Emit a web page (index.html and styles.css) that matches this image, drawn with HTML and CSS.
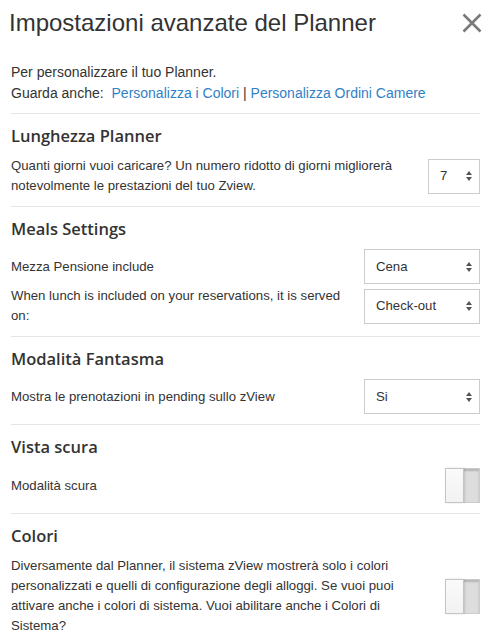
FILE: index.html
```html
<!DOCTYPE html>
<html lang="it">
<head>
<meta charset="utf-8">
<title>Impostazioni avanzate del Planner</title>
<link rel="stylesheet" href="styles.css">
</head>
<body>
<div class="modal">
  <div class="modal-header">
    <h1 class="modal-title">Impostazioni avanzate del Planner</h1>
    <button class="close" aria-label="Chiudi">
      <svg width="20" height="20" viewBox="0 0 20 20"><path d="M1.5 1.5 L18.5 18.5 M18.5 1.5 L1.5 18.5" stroke="#7a7a7a" stroke-width="2.6" fill="none"/></svg>
    </button>
  </div>
  <div class="intro">
    <p>Per personalizzare il tuo Planner.</p>
    <p>Guarda anche: <a class="first" href="#">Personalizza i Colori</a> | <a href="#">Personalizza Ordini Camere</a></p>
  </div>

  <section class="section">
    <h2>Lunghezza Planner</h2>
    <div class="row">
      <div class="label">Quanti giorni vuoi caricare? Un numero ridotto di giorni migliorerà notevolmente le prestazioni del tuo Zview.</div>
      <div class="select small"><span>7</span><i class="arrows"></i></div>
    </div>
  </section>

  <section class="section">
    <h2>Meals Settings</h2>
    <div class="row">
      <div class="label">Mezza Pensione include</div>
      <div class="select"><span>Cena</span><i class="arrows"></i></div>
    </div>
    <div class="row tight">
      <div class="label">When lunch is included on your reservations, it is served on:</div>
      <div class="select"><span>Check-out</span><i class="arrows"></i></div>
    </div>
  </section>

  <section class="section">
    <h2>Modalità Fantasma</h2>
    <div class="row">
      <div class="label">Mostra le prenotazioni in pending sullo zView</div>
      <div class="select"><span>Si</span><i class="arrows"></i></div>
    </div>
  </section>

  <section class="section">
    <h2>Vista scura</h2>
    <div class="row spaced">
      <div class="label">Modalità scura</div>
      <div class="toggle"><span class="knob"></span></div>
    </div>
  </section>

  <section class="section last">
    <h2>Colori</h2>
    <div class="row">
      <div class="label">Diversamente dal Planner, il sistema zView mostrerà solo i colori personalizzati e quelli di configurazione degli alloggi. Se vuoi puoi attivare anche i colori di sistema. Vuoi abilitare anche i Colori di Sistema?</div>
      <div class="toggle"><span class="knob"></span></div>
    </div>
  </section>
</div>
</body>
</html>
```

FILE: styles.css
```css
* { box-sizing: border-box; }
html, body { margin: 0; padding: 0; background: #fff; }
body {
  font-family: "Liberation Sans", Arial, sans-serif;
  font-size: 13.2px;
  line-height: 20px;
  color: #333;
}
.modal { padding: 0 10px 0 11px; }
.modal-header {
  display: flex;
  align-items: center;
  justify-content: space-between;
  padding-top: 8px;
  height: 38px;
}
.modal-title {
  margin: 0 0 0 -2px;
  font-family: "Liberation Sans", Arial, sans-serif;
  font-weight: normal;
  font-size: 24px;
  line-height: 30px;
  color: #333;
}
.close {
  border: 0;
  background: none;
  padding: 0;
  margin: 0 -2px 0 0;
  width: 20px;
  height: 20px;
  display: block;
}
.close svg { display: block; }
.intro {
  padding-top: 24px;
  padding-bottom: 9px;
  border-bottom: 1px solid #e5e5e5;
  font-size: 14px;
}
.intro p { margin: 0; line-height: 21px; }
.intro a { color: #3181c6; text-decoration: none; }
.intro a.first { margin-left: 4px; }
.section {
  padding: 12px 0 10px;
  border-bottom: 1px solid #e5e5e5;
}
.section.last { border-bottom: 0; }
.section h2 {
  margin: 0 0 10px;
  font-family: "Open Sans", sans-serif;
  font-weight: 600;
  font-size: 16.5px;
  line-height: 20px;
  color: #333;
}
.row {
  display: flex;
  align-items: center;
  gap: 16px;
}
.row.tight { margin-top: 2px; }
.row.spaced { margin-top: 11px; }
.label { flex: 1; }
.select {
  flex: none;
  width: 116px;
  height: 35px;
  border: 1px solid #ccc;
  display: flex;
  align-items: center;
  justify-content: space-between;
  padding: 0 6px 0 11px;
}
.select.small { width: 52px; }
.arrows {
  display: block;
  width: 7px;
  height: 10px;
  position: relative;
}
.arrows::before, .arrows::after {
  content: "";
  position: absolute;
  left: 0;
  border-left: 3.5px solid transparent;
  border-right: 3.5px solid transparent;
}
.arrows::before { top: 0; border-bottom: 4px solid #555; }
.arrows::after { bottom: 0; border-top: 4px solid #555; }
.toggle {
  flex: none;
  width: 35px;
  height: 35px;
  background: #ddd;
  border: 1px solid #ccc;
  box-shadow: inset 0 2px 2px rgba(0,0,0,0.18);
  position: relative;
}
.knob {
  position: absolute;
  left: -1px;
  top: -1px;
  bottom: -1px;
  width: 19px;
  background: linear-gradient(#fafafa, #f2f2f2);
  border: 1px solid #c4c4c4;
  box-shadow: 1px 0 2px rgba(0,0,0,0.12);
}
```
